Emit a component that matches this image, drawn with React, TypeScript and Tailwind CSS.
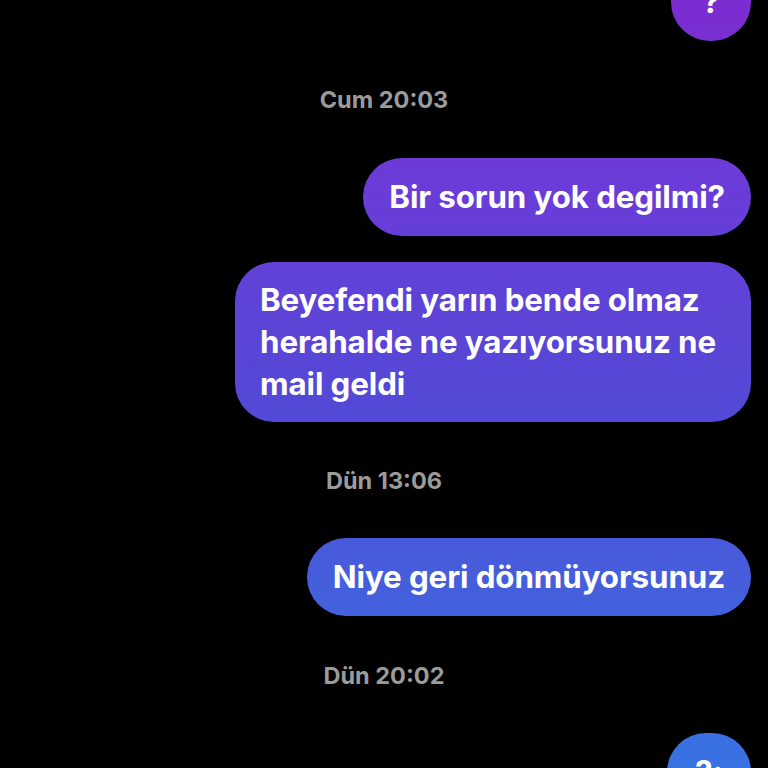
import React from "react";

const grad =
  "bg-[linear-gradient(180deg,#7b2cd0_0%,#6c3bd8_22%,#5349d6_53%,#4460dc_78%,#3873e3_100%)] bg-fixed";

function Bubble({ children, className = "" }: { children: React.ReactNode; className?: string }) {
  return (
    <div
      className={`${grad} mr-[17px] text-white font-bold text-[31.3px] leading-[42px] tracking-[-0.1px] rounded-[39px] px-[26px] ${className}`}
    >
      {children}
    </div>
  );
}

function Stamp({ children, className = "" }: { children: React.ReactNode; className?: string }) {
  return (
    <div className={`self-stretch text-center text-[#9b9b9b] font-bold text-[23.5px] leading-[24px] ${className}`}>
      {children}
    </div>
  );
}

export default function App() {
  return (
    <div
      className="w-[768px] h-[768px] bg-black overflow-hidden"
      style={{ fontFamily: "Inter, 'Noto Sans', sans-serif" }}
    >
      <div className="flex flex-col items-end">
        <Bubble className="-mt-[37px] py-[18px] min-w-[80px] text-center">?</Bubble>
        <Stamp className="mt-[47px]">Cum 20:03</Stamp>
        <Bubble className="mt-[46px] py-[18px]">Bir sorun yok degilmi?</Bubble>
        <Bubble className="mt-[26px] py-[17px] w-[516px] rounded-[34px] !px-[25px]">
          Beyefendi yarın bende olmaz
          <br />
          herahalde ne yazıyorsunuz ne
          <br />
          mail geldi
        </Bubble>
        <Stamp className="mt-[47px]">Dün 13:06</Stamp>
        <Bubble className="mt-[45px] py-[18px]">Niye geri dönmüyorsunuz</Bubble>
        <Stamp className="mt-[48px]">Dün 20:02</Stamp>
        <Bubble className="mt-[45px] py-[18px] min-w-[84px] text-center">?:</Bubble>
      </div>
    </div>
  );
}
